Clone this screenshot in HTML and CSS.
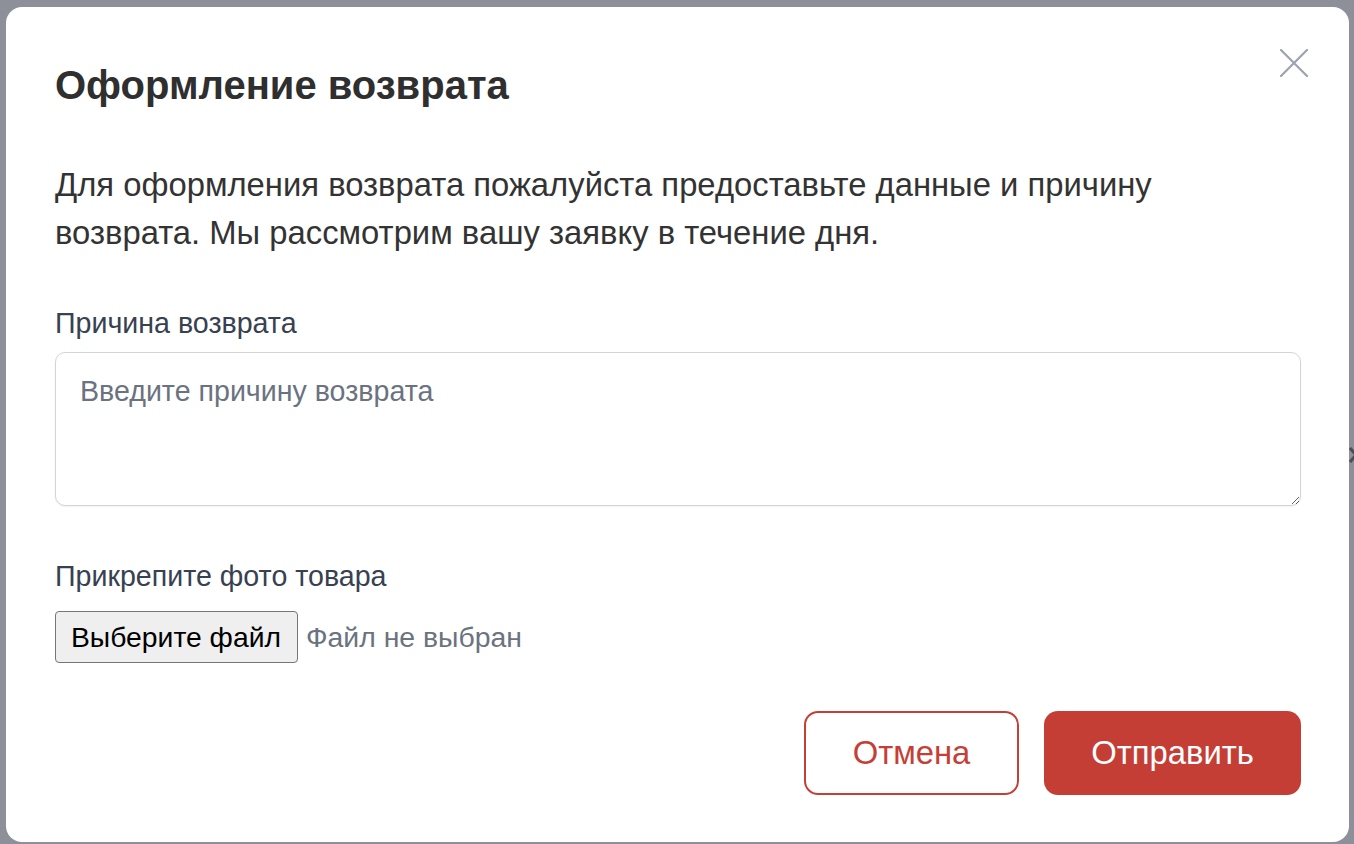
FILE: index.html
```html
<!DOCTYPE html>
<html lang="ru">
<head>
<meta charset="utf-8">
<title>Оформление возврата</title>
<link rel="stylesheet" href="styles.css">
</head>
<body>
<div class="page-edge" aria-hidden="true">
  <svg width="8" height="18" viewBox="0 0 8 18"><path d="M1 2 L7 9 L1 16" stroke="#4b4e57" stroke-width="3" fill="none"/></svg>
</div>
<div class="backdrop">
  <div class="modal">
    <button class="close" aria-label="Закрыть">
      <svg width="28" height="28" viewBox="0 0 28 28"><path d="M1 1 L27 27 M27 1 L1 27" stroke="#9ca3af" stroke-width="2.2" stroke-linecap="round" fill="none"/></svg>
    </button>
    <h2 class="title">Оформление возврата</h2>
    <p class="desc">Для оформления возврата пожалуйста предоставьте данные и причину возврата. Мы рассмотрим вашу заявку в течение дня.</p>
    <div class="field">
      <label class="label" for="reason">Причина возврата</label>
      <textarea id="reason" class="textarea" placeholder="Введите причину возврата"></textarea>
    </div>
    <div class="field field-file">
      <span class="label">Прикрепите фото товара</span>
      <div class="file-row">
        <span class="file-btn">Выберите файл</span>
        <span class="file-name">Файл не выбран</span>
      </div>
    </div>
    <div class="actions">
      <button class="btn btn-outline">Отмена</button>
      <button class="btn btn-primary">Отправить</button>
    </div>
  </div>
</div>
</body>
</html>
```
FILE: styles.css
```css
* { box-sizing: border-box; }
html, body { margin: 0; padding: 0; }
body {
  position: relative;
  background: #8e9099;
  font-family: "Liberation Sans", Arial, sans-serif;
  height: 844px;
  overflow: hidden;
}
.page-edge {
  position: absolute;
  left: 1349px;
  top: 446px;
  width: 5px;
  height: 18px;
  overflow: hidden;
}
.backdrop {
  padding: 7px 5px 0 6px;
}
.modal {
  position: relative;
  background: #ffffff;
  border-radius: 16px;
  height: 835px;
  padding: 52px 48px 48px 49px;
  display: flex;
  flex-direction: column;
}
.close {
  position: absolute;
  top: 42px;
  right: 41px;
  width: 28px;
  height: 28px;
  padding: 0;
  border: 0;
  background: none;
  display: flex;
}
.title {
  margin: 0;
  font-size: 40px;
  line-height: 52px;
  font-weight: 700;
  color: #2f2f2f;
}
.desc {
  margin: 50px 0 0;
  font-size: 32.8px;
  line-height: 48px;
  color: #333333;
  max-width: 1140px;
}
.field {
  display: flex;
  flex-direction: column;
  margin-top: 50px;
}
.label {
  font-size: 28.6px;
  line-height: 32px;
  color: #374151;
  margin-bottom: 13px;
}
.textarea {
  height: 154px;
  border: 1px solid #d1d5db;
  border-radius: 10px;
  padding: 22px 24px;
  font-family: "Liberation Sans", Arial, sans-serif;
  font-size: 28.6px;
  line-height: 32px;
  color: #111827;
  box-shadow: 0 1px 2px rgba(0,0,0,0.06);
  resize: vertical;
}
.textarea::placeholder { color: #6b7280; }
.field-file { margin-top: 54px; }
.field-file .label { margin-bottom: 19px; }
.file-row {
  display: flex;
  align-items: center;
  gap: 8px;
}
.file-btn {
  height: 52px;
  padding: 0 16px 0 15px;
  display: flex;
  align-items: center;
  background: #efefef;
  border: 1px solid #767676;
  border-radius: 4px;
  font-size: 28.3px;
  color: #000000;
}
.file-name {
  font-size: 28.4px;
  color: #6b7280;
}
.actions {
  display: flex;
  justify-content: flex-end;
  gap: 25px;
  margin-top: 48px;
}
.btn {
  height: 84px;
  border-radius: 14px;
  font-family: "Liberation Sans", Arial, sans-serif;
  font-size: 32.8px;
  padding: 0;
}
.btn-outline {
  width: 215px;
  background: #ffffff;
  border: 2px solid #c53f37;
  color: #c53f37;
}
.btn-primary {
  width: 257px;
  background: #c43e36;
  border: 0;
  color: #ffffff;
}
```
